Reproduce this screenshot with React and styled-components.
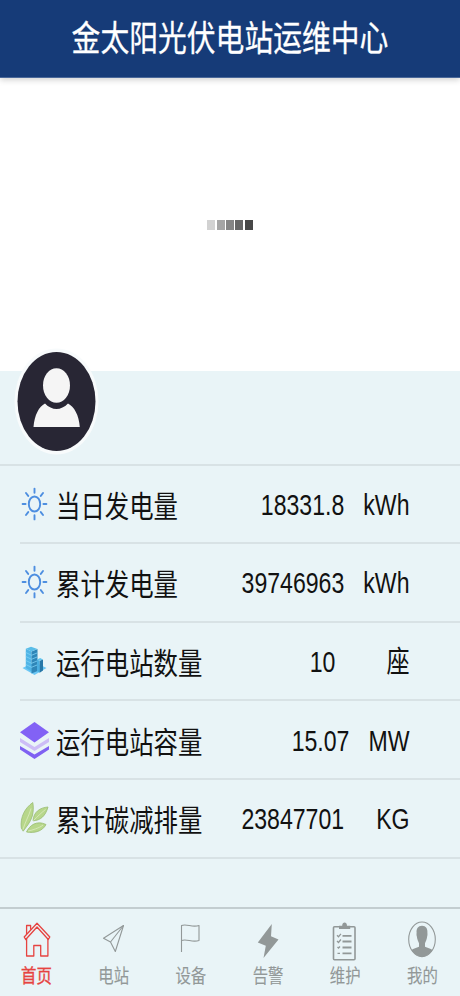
import React from 'react';
import styled, { createGlobalStyle } from 'styled-components';

const GlobalStyle = createGlobalStyle`
  * {
    box-sizing: border-box;
  }

  body {
    margin: 0;
    background: #fff;
    font-family: 'Liberation Sans', 'Noto Sans CJK SC', sans-serif;
  }

  svg {
    display: block;
  }
`;

const Container = styled.div`
  display: flex;
  flex-direction: column;
  width: 460px;
  height: 996px;
  overflow: hidden;
`;

const Header = styled.header`
  display: flex;
  align-items: center;
  justify-content: center;
  flex: none;
  height: 78px;
  background: #163b78;
  border-bottom: 1px solid #4a689a;
  box-shadow: 0 2px 6px rgba(0, 0, 0, 0.18);
`;

const Title = styled.h1`
  margin: 0;
  font-size: 28.8px;
  font-weight: 400;
  line-height: 36px;
  color: #fff;
  white-space: nowrap;
  -webkit-text-stroke: 0.25px #fff;
  transform: scaleY(1.24);
`;

const Banner = styled.div`
  display: flex;
  align-items: center;
  justify-content: center;
  gap: 1.4px;
  flex: none;
  height: 293px;
`;

const LoadingBlock = styled.span`
  width: 8px;
  height: 10px;
  background: ${(props) => props.$color};
`;

const Content = styled.main`
  flex: 1;
  background: #e9f4f7;
`;

const Profile = styled.div`
  display: flex;
  align-items: flex-start;
  height: 94.5px;
  padding-left: 13px;
  border-bottom: 2px solid #d8e2e5;
`;

const Avatar = styled.svg`
  margin-top: -23px;
`;

const List = styled.div`
  border-bottom: 2px solid #d8e2e5;
`;

const Row = styled.div`
  display: flex;
  align-items: center;
  height: 78.6px;
  margin-left: 20px;
  padding-right: 50.5px;
  border-bottom: 2px solid #d8e2e5;

  &:last-child {
    height: 77px;
    border-bottom: none;
  }
`;

const RowIcon = styled.div`
  flex: none;
  width: 36px;
`;

const Label = styled.span`
  flex: 1;
  font-size: 24.4px;
  line-height: 32px;
  color: #111;
  white-space: nowrap;
  transform: translateY(3px) scaleY(1.21);
`;

const Value = styled.span`
  margin-right: ${(props) => props.$gap}px;
  font-size: 23.1px;
  line-height: 30px;
  color: #111;
  transform: translateY(1px) scaleY(1.28);
`;

const Unit = styled.span`
  font-size: 23.1px;
  line-height: 30px;
  color: #111;
  transform: translateY(1px) scaleY(1.28);
`;

const TabBar = styled.nav`
  display: flex;
  justify-content: space-between;
  flex: none;
  height: 89px;
  padding: 12px 22px 0 21px;
  background: #e9f4f7;
  border-top: 2px solid #c3cdd0;
`;

const Tab = styled.div`
  display: flex;
  flex-direction: column;
  align-items: center;
  width: 31px;
  color: ${(props) => (props.$active ? '#e64340' : '#929898')};
`;

const TabIcon = styled.div`
  height: 40px;
`;

const TabLabel = styled.span`
  margin-top: 3px;
  font-size: 15.4px;
  line-height: 24px;
  white-space: nowrap;
  -webkit-text-stroke: ${(props) => (props.$active ? '0.3px' : '0.1px')} currentColor;
  transform: translateY(1px) scaleY(1.24);
`;

const Sun = () => (
  <svg width="29" height="36" viewBox="0 0 29 36" fill="none" stroke="#4d8ee0" strokeWidth="1.9">
    <ellipse cx="14.5" cy="18" rx="5.7" ry="7.5" />
    <path
      strokeLinecap="round"
      d="M14.5 2.6v4.2M14.5 29.2v4.2M2.6 18h3M23.4 18h3M6 7l2.2 2.9M20.8 26.1L23 29M23 7l-2.2 2.9M8.2 26.1L6 29"
    />
  </svg>
);

const Building = () => (
  <svg width="29" height="36" viewBox="0 -1.5 29 36">
    <path d="M2.5 23.5l12-6 12 6-12 7z" fill="#6cc7f5" />
    <path d="M5.8 4.2L11.5 7v20L5.8 23.5z" fill="#4fb4e6" />
    <path d="M11.5 7l6-2.6v22L11.5 29z" fill="#2f86b8" />
    <path d="M5.8 4.2L11 2.2l6.5 2.2-6 2.6z" fill="#59bde8" />
    <path d="M5.8 8l5.7 2.8 6-2.5M5.8 12l5.7 2.8 6-2.5M5.8 16l5.7 2.8 6-2.5M5.8 20l5.7 2.8 6-2.5" fill="none" stroke="#7fd2f5" strokeWidth="0.8" />
    <path d="M17 15l2.7 1.3v12L17 26.5z" fill="#4aaee0" />
    <path d="M19.7 16.3l3.3-1.4V26l-3.3 2.3z" fill="#2878a8" />
    <path d="M17 15l3.2-1.5 2.8 1.4-3.3 1.4z" fill="#63c5ee" />
  </svg>
);

const Layers = () => (
  <svg width="29" height="38" viewBox="0 0 29 38">
    <path d="M0 25l14.5 8.5L29 25v3.5L14.5 38 0 28.5z" fill="#7f61f2" />
    <path d="M0 17l14.5 9L29 17v4L14.5 30 0 21z" fill="#cdbdf6" />
    <path d="M14.5 1L29 11.2 14.5 21.5 0 11.2z" fill="#8262f5" />
  </svg>
);

const Leaf = () => (
  <svg width="29" height="36" viewBox="0 0 29 36" fill="#b7d78b" stroke="#9bbd73" strokeWidth="0.8">
    <path d="M12.8 2.5C5 8 0 17 1.3 28l1.900 3.200C6 27 10.500 22.500 12.300 16 13.500 11.500 13.600 7 12.800 2.500z" />
    <path d="M28 7C20 7.500 13.500 12 13 20.800 20.500 20.500 25.500 16 28 7z" />
    <path d="M6.500 32C9.500 25.500 16.500 20 26 24.500 22.500 31.500 14 33.500 6.500 32z" />
    <path d="M3 29.500C5 22 9 16 11 8.500M13.500 20.500C17 17 21 13 25.500 9.500M8 31c5-1 11-3 15-5.800" fill="none" stroke="#dcebc0" />
  </svg>
);

const HomeIcon = () => (
  <svg width="28" height="38" viewBox="0 0 28 38" fill="none" stroke="currentColor" strokeWidth="1.3" strokeLinejoin="round">
    <path d="M1.200 16L14 2.200 26.800 16l-1.500 2.500L14 6 2.700 18.500z" />
    <path d="M3.600 13V4.500h4v4.300M3.600 17.500V35h7.200V24.500h6.900V35h7.200V17.500" />
  </svg>
);

const SendIcon = () => (
  <svg width="28" height="38" viewBox="0 0 28 38" fill="none" stroke="currentColor" strokeWidth="1.1" strokeLinejoin="round">
    <path d="M23.500 4.500L3.500 17.200l7 3.800 4.800 9.500z" />
    <path d="M23.500 4.500l-13 16.500" />
  </svg>
);

const FlagIcon = () => (
  <svg width="28" height="38" viewBox="0 0 28 38" fill="none" stroke="currentColor" strokeWidth="1.1" strokeLinejoin="round">
    <path d="M4.500 31V4.500C10 2.500 15 6.800 22 4.500v15c-7 2.300-12-2-17.500 0" />
  </svg>
);

const BoltIcon = () => (
  <svg width="28" height="38" viewBox="0 0 28 38" fill="currentColor">
    <path d="M17.800 3L3.800 21.500l8 3.200L9.500 37 24.500 18.500l-7.500-3.200z" />
  </svg>
);

const ClipboardIcon = () => (
  <svg width="28" height="40" viewBox="0 0 28 40" fill="none" stroke="currentColor">
    <rect x="2.500" y="5.700" width="21.500" height="33" rx="1" strokeWidth="1.6" />
    <path d="M8 8V4.800h3.200c0-4.400 4.800-4.400 4.800 0h3.200V8z" fill="currentColor" stroke="none" />
    <path d="M11.500 14.800h9M11.500 20.500h9M11.500 26.500h9M11.500 32.300h9" strokeWidth="1.8" />
    <path d="M6 14.300l1.500 1.500 2.400-3M6 20l1.500 1.500 2.400-3M6.500 26l1 1 1.500-1.500M6.500 32.300h2.500" strokeWidth="1.3" />
  </svg>
);

const UserIcon = () => (
  <svg width="28" height="38" viewBox="0 0 28 38">
    <ellipse cx="14" cy="18.300" rx="13.300" ry="17.300" fill="none" stroke="currentColor" strokeWidth="1.1" />
    <path
      fill="currentColor"
      d="M14 4.800c-4 0-5.700 3-5.400 6.800 0 1.200-.3 2.200.2 3.700.3 3.500 1.700 5.300 2.200 7v3.500c-2.500 1.200-5.500 1.500-7.500 3.200C6 33.200 9.700 35.600 14 35.600s8-2.400 10.500-6.600c-2-1.700-5-2-7.500-3.200v-3.500c.5-1.700 1.900-3.500 2.200-7 .5-1.500.2-2.500.2-3.700.3-3.800-1.400-6.800-5.400-6.800z"
    />
  </svg>
);

const blocks = ['#d2d2d2', '#a5a5a5', '#858585', '#666', '#474747'];

const rows = [
  { icon: <Sun />, label: '当日发电量', value: '18331.8', unit: 'kWh', gap: 19 },
  { icon: <Sun />, label: '累计发电量', value: '39746963', unit: 'kWh', gap: 19 },
  { icon: <Building />, label: '运行电站数量', value: '10', unit: '座', gap: 51 },
  { icon: <Layers />, label: '运行电站容量', value: '15.07', unit: 'MW', gap: 19 },
  { icon: <Leaf />, label: '累计碳减排量', value: '23847701', unit: 'KG', gap: 32 },
];

const tabs = [
  { icon: <HomeIcon />, label: '首页', active: true },
  { icon: <SendIcon />, label: '电站' },
  { icon: <FlagIcon />, label: '设备' },
  { icon: <BoltIcon />, label: '告警' },
  { icon: <ClipboardIcon />, label: '维护' },
  { icon: <UserIcon />, label: '我的' },
];

const App = () => {
  return (
    <Container>
      <GlobalStyle />
      <Header>
        <Title>金太阳光伏电站运维中心</Title>
      </Header>
      <Banner>
        {blocks.map((color) => (
          <LoadingBlock key={color} $color={color} />
        ))}
      </Banner>
      <Content>
        <Profile>
          <Avatar width="87" height="108" viewBox="0 0 87 108">
            <ellipse cx="43.5" cy="53.5" rx="42" ry="53" fill="#f8fbfc" />
            <ellipse cx="43.5" cy="53.5" rx="39" ry="49.5" fill="#282634" />
            <path d="M20.500 79C21.500 67 26 58.500 32 55.500c7 7.300 16 7.300 23 0C61 58.500 66 67 66.800 79z" fill="#f5f5f5" />
            <ellipse cx="43.5" cy="37.5" rx="13.5" ry="17.3" fill="#f5f5f5" />
          </Avatar>
        </Profile>
        <List>
          {rows.map((row) => (
            <Row key={row.label}>
              <RowIcon>{row.icon}</RowIcon>
              <Label>{row.label}</Label>
              <Value $gap={row.gap}>{row.value}</Value>
              <Unit>{row.unit}</Unit>
            </Row>
          ))}
        </List>
      </Content>
      <TabBar>
        {tabs.map((tab) => (
          <Tab key={tab.label} $active={tab.active}>
            <TabIcon>{tab.icon}</TabIcon>
            <TabLabel $active={tab.active}>{tab.label}</TabLabel>
          </Tab>
        ))}
      </TabBar>
    </Container>
  );
};

export default App;
